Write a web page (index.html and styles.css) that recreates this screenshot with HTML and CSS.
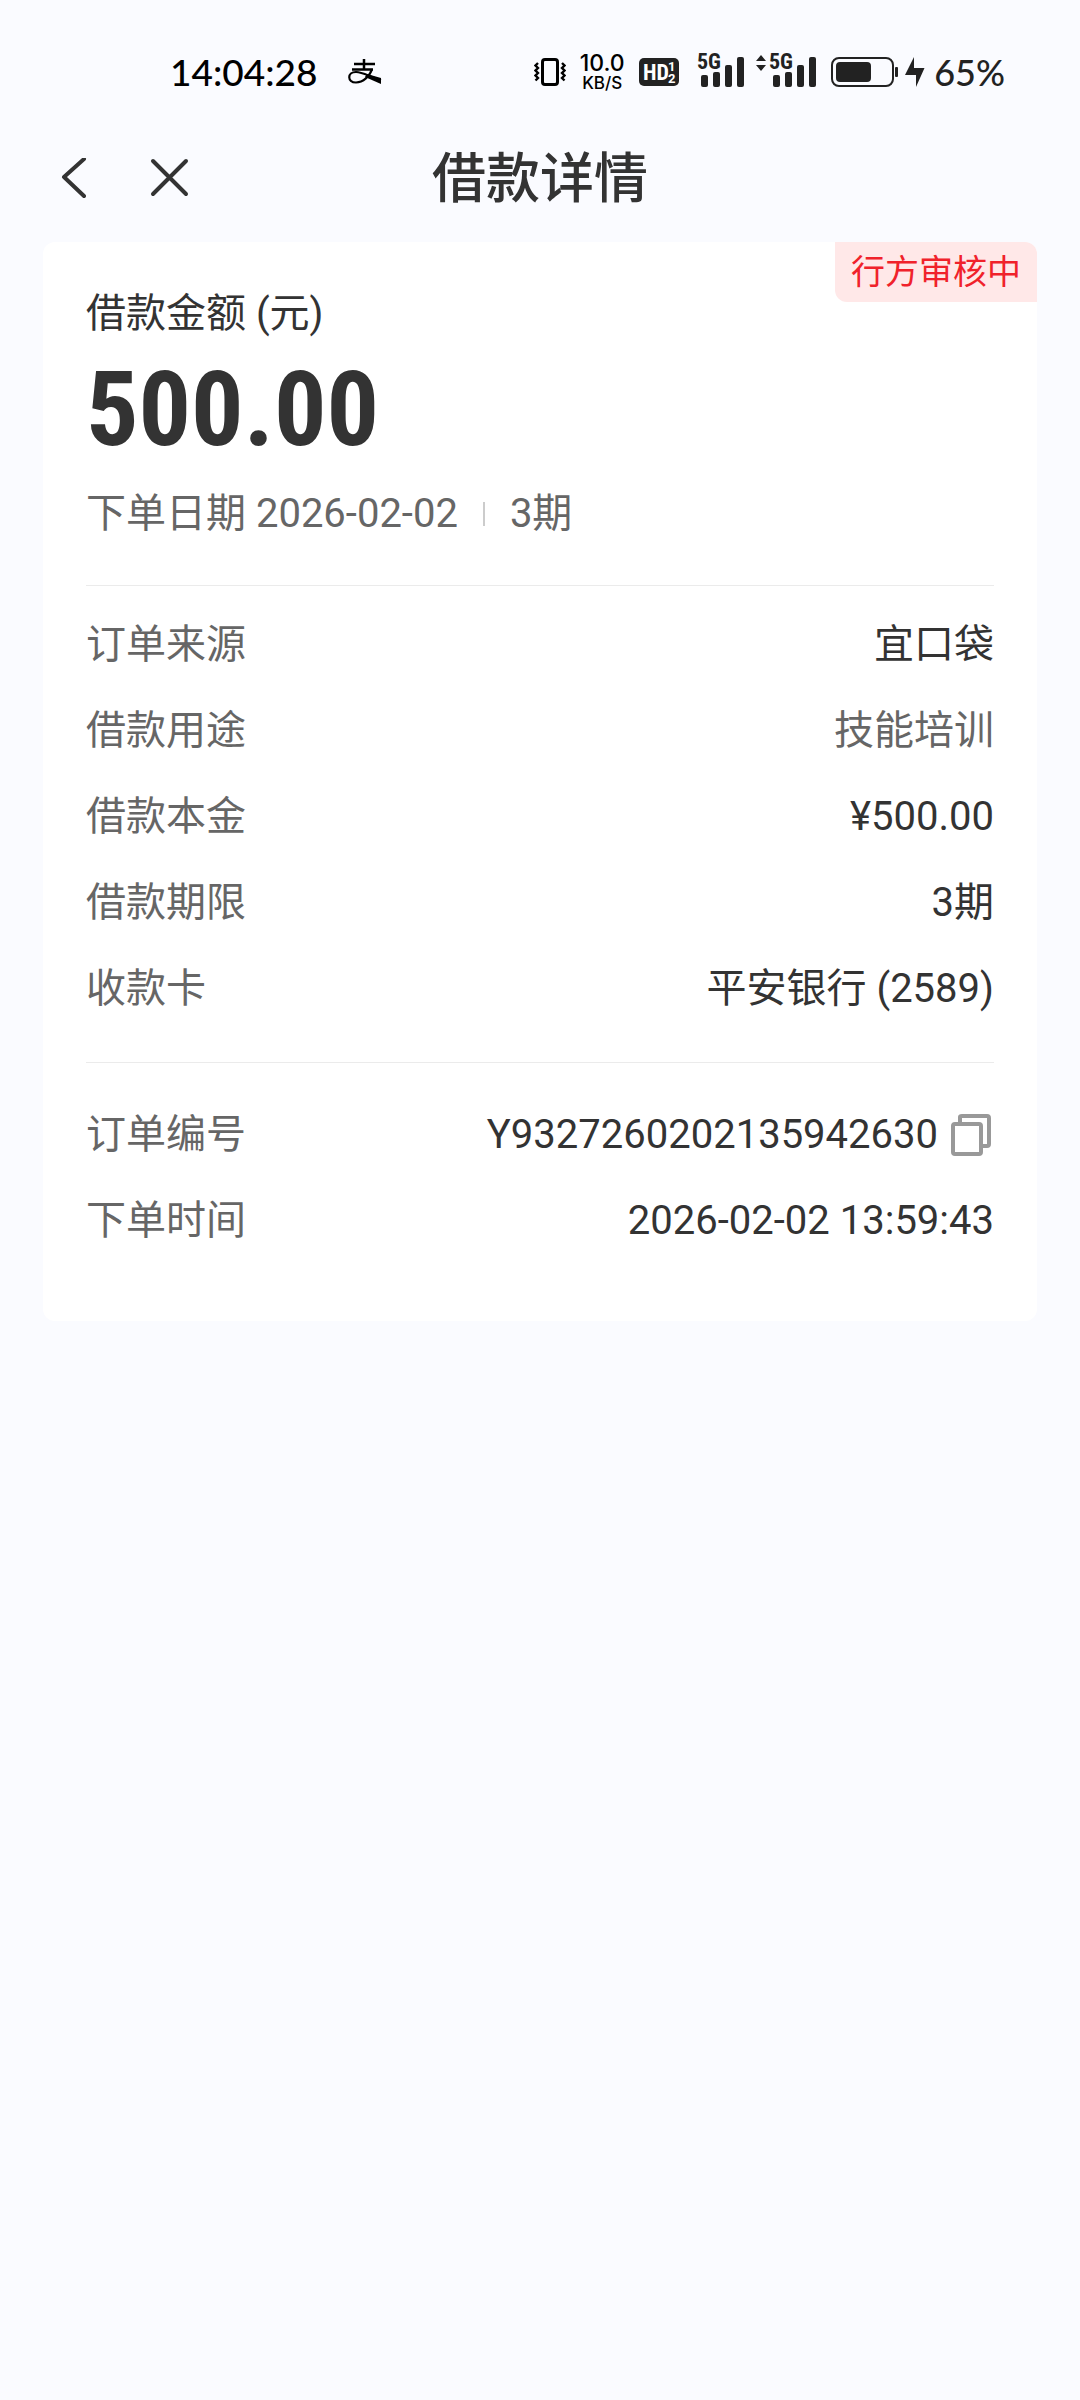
FILE: index.html
```html
<!DOCTYPE html>
<html lang="zh-CN">
<head>
<meta charset="UTF-8">
<meta name="viewport" content="width=device-width, initial-scale=1.0">
<title>借款详情</title>
<link rel="stylesheet" href="styles.css">
</head>
<body>
<div class="status-bar">
<span class="status-text">14:04:28</span>
<svg class="pay-icon" width="34" height="26" viewBox="0 0 34 26">
<path d="M6 5H27M4 10.500H25M16 0V10" fill="none" stroke="#000" stroke-width="2.500"/>
<path d="M24 10C22 17 15 23.500 8 23.500C-1 23.500 -1 13 8 13C15 13 22 18 33 21" fill="none" stroke="#000" stroke-width="2.200"/>
<path d="M19 15L33 19V25L17 18Z"/>
</svg>
<div class="status-right">
<svg width="32" height="30" viewBox="0 0 32 30">
<rect x="8.500" y="2.500" width="15" height="25" rx="2.500" fill="none" stroke="#000" stroke-width="3"/>
<path d="M4 6L1.500 8.500L4 11L1.500 13.500L4 16L1.500 18.500L4 21L1.500 23.500M28 6L30.500 8.500L28 11L30.500 13.500L28 16L30.500 18.500L28 21L30.500 23.500" fill="none" stroke="#000" stroke-width="2.400"/>
</svg>
<div class="speed"><span class="speed-value">10.0</span><span class="speed-unit">KB/S</span></div>
<svg class="hd" width="40" height="28" viewBox="0 0 40 28">
<rect width="40" height="28" rx="5" fill="#222"/>
<text class="hd-text" x="4" y="22">HD</text>
<text class="hd-sub" x="29" y="13">1</text>
<text class="hd-sub" x="29" y="25">2</text>
</svg>
<svg class="signal" width="120" height="40" viewBox="0 -6 120 40" fill="#222">
<text class="net-text" x="0" y="16">5G</text>
<rect x="4" y="22" width="7" height="12" rx="2"/>
<rect x="16" y="19" width="7" height="15" rx="2"/>
<rect x="28" y="12" width="7" height="22" rx="2"/>
<rect x="40" y="4" width="7" height="30" rx="2"/>
<path d="M59 8L64 2L69 8ZM59 12H69L64 18Z"/>
<text class="net-text" x="72" y="16">5G</text>
<rect x="76" y="22" width="7" height="12" rx="2"/>
<rect x="88" y="19" width="7" height="15" rx="2"/>
<rect x="100" y="12" width="7" height="22" rx="2"/>
<rect x="112" y="4" width="7" height="30" rx="2"/>
</svg>
<svg class="battery" width="67" height="30" viewBox="0 0 67 30" fill="#222">
<rect x="1" y="1" width="61" height="28" rx="7" fill="none" stroke="#222" stroke-width="2"/>
<rect x="5" y="5" width="35" height="20" rx="4"/>
<rect x="64" y="10" width="3" height="10" rx="1"/>
</svg>
<svg class="bolt" width="20" height="30" viewBox="0 0 20 30" fill="#222"><path d="M9 0V11H19.500L11 30V18H0Z"/></svg>
<span class="status-text battery-text">65%</span>
</div>
</div>

<header class="nav">
<div class="nav-buttons">
<button type="button" aria-label="返回"><svg width="44" height="44" viewBox="0 0 44 44"><path d="M32 1L12 19L32 38"/></svg></button>
<button type="button" aria-label="关闭"><svg width="44" height="44" viewBox="0 0 44 44"><path d="M7 3L40 36M40 3L7 36"/></svg></button>
</div>
<h1>借款详情</h1>
</header>

<main class="card">
<span class="badge">行方审核中</span>
<section class="summary">
<p class="summary-label">借款金额 (元)</p>
<p class="amount">500.00</p>
<p class="summary-info"><span>下单日期 2026-02-02</span><i class="separator"></i><span>3期</span></p>
</section>
<dl class="details">
<div class="row"><dt>订单来源</dt><dd>宜口袋</dd></div>
<div class="row"><dt>借款用途</dt><dd class="muted">技能培训</dd></div>
<div class="row"><dt>借款本金</dt><dd>¥500.00</dd></div>
<div class="row"><dt>借款期限</dt><dd>3期</dd></div>
<div class="row"><dt>收款卡</dt><dd>平安银行 (2589)</dd></div>
</dl>
<dl class="details order">
<div class="row"><dt>订单编号</dt><dd>Y9327260202135942630
<button type="button" class="copy" aria-label="复制"><svg width="42" height="44" viewBox="0 0 42 44"><path d="M10 10V4Q10 3 12 3H37Q39 3 39 5V31Q39 33 37 33H32"/><rect x="3" y="11" width="28" height="30" rx="2"/></svg></button></dd></div>
<div class="row"><dt>下单时间</dt><dd>2026-02-02 13:59:43</dd></div>
</dl>
</main>
</body>
</html>
```
FILE: styles.css
```css
* {
    box-sizing: border-box;
}
body {
    margin: 0;
    background-color: #fafbff;
    color: #333;
    font-family: Roboto, "Noto Sans CJK SC", sans-serif;
    font-size: 40px;
    line-height: 56px;
}
h1, p, dl, dd {
    margin: 0;
}
svg {
    display: block;
}
button {
    padding: 0;
    border: none;
    background: none;
    cursor: pointer;
}

/* status bar */
.status-bar {
    display: flex;
    align-items: center;
    height: 144px;
    padding: 0 75px 0 170px;
}
.status-text {
    font-family: Lato, sans-serif;
    font-size: 37px;
    font-weight: 500;
    color: #000;
}
.pay-icon {
    margin-left: 31px;
}
.status-right {
    display: flex;
    align-items: center;
    margin-left: auto;
}
.speed {
    display: flex;
    flex-direction: column;
    align-items: center;
    width: 48px;
    margin: 0 13px 0 12px;
    color: #000;
    font-family: Inter, sans-serif;
    font-weight: 500;
}
.speed-value {
    font-size: 23px;
    line-height: 22px;
}
.speed-unit {
    font-size: 17px;
    line-height: 18px;
}
.hd-text {
    fill: #fff;
    font-family: "Roboto Condensed", Roboto, sans-serif;
    font-size: 22px;
    font-weight: 700;
}
.hd-sub {
    fill: #fff;
    font-size: 13px;
    font-weight: 700;
}
.net-text {
    font-family: "Roboto Condensed", Roboto, sans-serif;
    font-size: 22px;
    font-weight: 700;
}
.signal {
    margin: 0 14px 10px 18px;
}
.bolt {
    margin: 0 9px 0 7px;
}
.battery-text {
    color: #222;
    font-size: 36px;
}

/* title bar */
.nav {
    display: flex;
    align-items: center;
    justify-content: center;
    position: relative;
    height: 72px;
    margin-bottom: 26px;
}
.nav-buttons {
    display: flex;
    gap: 50px;
    position: absolute;
    left: 52px;
}
.nav-buttons path {
    fill: none;
    stroke: #333;
    stroke-width: 4;
    stroke-linecap: round;
    stroke-linejoin: round;
}
h1 {
    font-size: 54px;
    font-weight: 500;
}

/* card */
.card {
    position: relative;
    margin: 0 43px;
    padding: 44px 43px 57px;
    border-radius: 12px;
    background-color: #fff;
}
.badge {
    position: absolute;
    top: 0;
    right: 0;
    padding: 0 16px;
    border-radius: 0 12px 0 12px;
    background-color: #ffe8e8;
    color: #f0222b;
    font-size: 34px;
    line-height: 60px;
}
.summary {
    padding-bottom: 43px;
}
.amount {
    margin: 18px 0 26px;
    font-family: "Roboto Condensed", Roboto, sans-serif;
    font-size: 104px;
    font-weight: 700;
    line-height: 100px;
}
.summary-info {
    display: flex;
    align-items: center;
    color: #666;
}
.separator {
    width: 2px;
    height: 24px;
    margin: 0 25px;
    background-color: #ccc;
}
.details {
    padding: 16px 0 30px;
    border-top: 1px solid #ebebeb;
}
.order {
    padding: 29px 0 0;
}
.row {
    display: flex;
    align-items: center;
    justify-content: space-between;
    height: 86px;
}
.row dt, .row .muted {
    color: #666;
}
.row dd {
    display: flex;
    align-items: center;
}
.copy {
    margin: 0 2px 0 12px;
}
.copy svg {
    fill: none;
    stroke: #999;
    stroke-width: 4;
}
```
